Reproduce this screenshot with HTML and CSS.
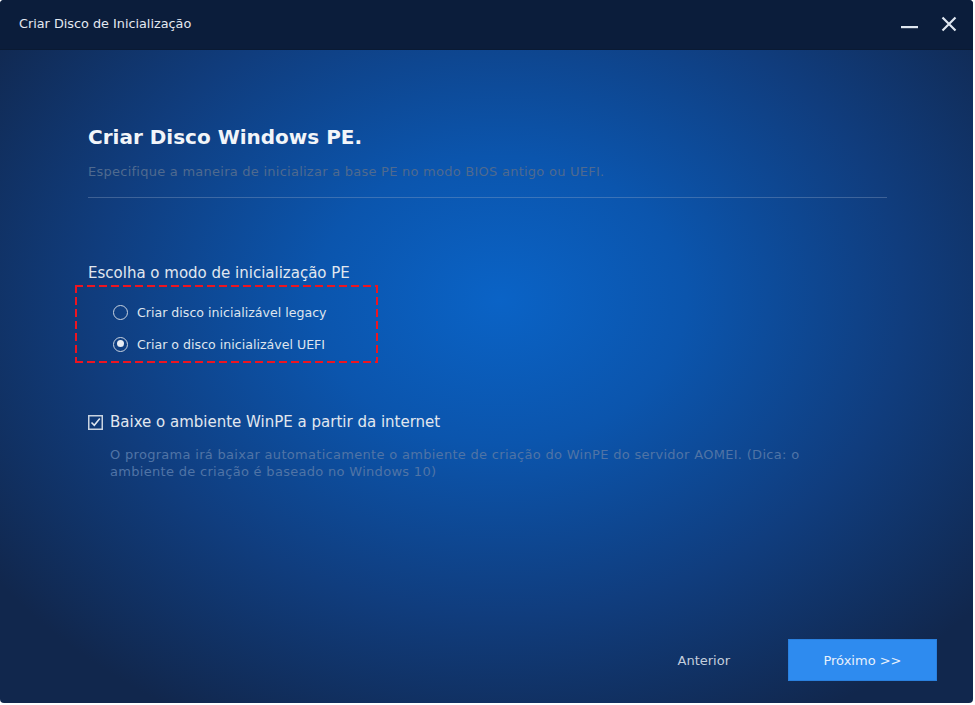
FILE: index.html
```html
<!DOCTYPE html>
<html lang="pt">
<head>
<meta charset="utf-8">
<title>Criar Disco de Inicialização</title>
<link rel="stylesheet" href="styles.css">
</head>
<body>
<div class="window">
  <div class="titlebar">
    <span class="title">Criar Disco de Inicialização</span>
    <div class="controls">
      <span class="ctl min"><svg width="18" height="18" viewBox="0 0 18 18"><rect x="0" y="11" width="17" height="2.2" fill="#dfe6f0"/></svg></span>
      <span class="ctl close"><svg width="16" height="16" viewBox="0 0 16 16"><path d="M1.5 1.5 L14.5 14.5 M14.5 1.5 L1.5 14.5" stroke="#dfe6f0" stroke-width="2.2"/></svg></span>
    </div>
  </div>
  <div class="content">
    <h1 class="heading">Criar Disco Windows PE.</h1>
    <p class="subtitle">Especifique a maneira de inicializar a base PE no modo BIOS antigo ou UEFI.</p>
    <div class="sep"></div>

    <div class="section-label">Escolha o modo de inicialização PE</div>
    <div class="radio-box">
      <div class="radio-row"><span class="radio"></span><span class="radio-text">Criar disco inicializável legacy</span></div>
      <div class="radio-row"><span class="radio checked"></span><span class="radio-text">Criar o disco inicializável UEFI</span></div>
    </div>

    <div class="check-row">
      <span class="check"><svg width="15" height="15" viewBox="0 0 15 15"><rect x="0.75" y="0.75" width="13.5" height="13.5" fill="none" stroke="#c9d3e0" stroke-width="1.5"/><path d="M3.5 7.5 L6.3 10.3 L11.8 3.6" fill="none" stroke="#dfe6f0" stroke-width="1.6"/></svg></span>
      <span class="check-text">Baixe o ambiente WinPE a partir da internet</span>
    </div>
    <p class="desc">O programa irá baixar automaticamente o ambiente de criação do WinPE do servidor AOMEI. (Dica: o ambiente de criação é baseado no Windows 10)</p>

    <div class="footer">
      <button class="btn-link">Anterior</button>
      <button class="btn-primary">Próximo &gt;&gt;</button>
    </div>
  </div>
</div>
</body>
</html>
```
FILE: styles.css
```css
html, body {
  margin: 0;
  padding: 0;
  background: #ffffff;
}
body {
  width: 975px;
  height: 705px;
  overflow: hidden;
  font-family: "DejaVu Sans", Verdana, sans-serif;
}
.window {
  width: 973px;
  height: 703px;
  border-radius: 4px;
  overflow: hidden;
  display: flex;
  flex-direction: column;
  background: radial-gradient(ellipse 620px 480px at 500px 300px, #0a63c6 0%, #0b55ad 30%, #103d7e 65%, #11274d 100%);
}
.titlebar {
  height: 50px;
  flex: none;
  background: #0b1d3b;
  border-bottom: 1px solid #0a1a33;
  display: flex;
  align-items: center;
  justify-content: space-between;
  box-sizing: border-box;
}
.title {
  color: #e4e9f1;
  font-size: 12.8px;
  margin-left: 19px;
  margin-top: -2px;
}
.controls {
  display: flex;
  align-items: center;
  gap: 22px;
  margin-right: 16px;
  margin-top: -2px;
}
.ctl { display: flex; }
.content {
  flex: 1;
  display: flex;
  flex-direction: column;
  padding: 0 86px 0 88px;
}
.heading {
  margin: 75px 0 0 0;
  font-size: 20px;
  font-weight: bold;
  color: #f2f5f9;
  line-height: 24px;
}
.subtitle {
  margin: 14px 0 0 0;
  font-size: 13px;
  line-height: 18px;
  color: #4f6a8f;
  letter-spacing: 0.25px;
}
.sep {
  margin-top: 16px;
  height: 1px;
  background: rgba(150, 170, 200, 0.35);
}
.section-label {
  margin-top: 66px;
  font-size: 15px;
  line-height: 18px;
  color: #e1e7ef;
}
.radio-box {
  margin: 3px 0 0 -13px;
  width: 303px;
  height: 78px;
  box-sizing: border-box;
  background:
    linear-gradient(to right, #ee1520 8px, transparent 8px) left top / 12px 2px repeat-x,
    linear-gradient(to right, #ee1520 8px, transparent 8px) left bottom / 12px 2px repeat-x,
    linear-gradient(to bottom, #ee1520 8px, transparent 8px) left top / 2px 12px repeat-y,
    linear-gradient(to bottom, #ee1520 8px, transparent 8px) right top / 2px 12px repeat-y;
  padding: 18px 0 0 38px;
  display: flex;
  flex-direction: column;
  gap: 14px;
}
.radio-row {
  display: flex;
  align-items: center;
  height: 18px;
}
.radio {
  width: 15px;
  height: 15px;
  border: 1.5px solid #c9d3e0;
  border-radius: 50%;
  box-sizing: border-box;
  position: relative;
  flex: none;
}
.radio.checked::after {
  content: "";
  position: absolute;
  left: 2.5px;
  top: 2.5px;
  width: 7px;
  height: 7px;
  border-radius: 50%;
  background: #e8edf4;
}
.radio-text {
  margin-left: 9px;
  font-size: 12.6px;
  color: #dfe5ee;
}
.check-row {
  margin-top: 50px;
  display: flex;
  align-items: center;
  height: 18px;
}
.check { display: flex; }
.check-text {
  margin-left: 7px;
  font-size: 15px;
  color: #e1e7ef;
}
.desc {
  margin: 15px 0 0 22px;
  font-size: 13px;
  line-height: 17px;
  color: #5074a6;
  letter-spacing: 0.3px;
  max-width: 700px;
}
.footer {
  margin-top: auto;
  margin-bottom: 22px;
  display: flex;
  justify-content: flex-end;
  align-items: center;
  margin-right: -50px;
}
.btn-link {
  background: none;
  border: none;
  font-family: inherit;
  font-size: 13px;
  color: #c3cedd;
  padding: 0;
  margin-right: 58px;
  cursor: pointer;
}
.btn-primary {
  width: 149px;
  height: 42px;
  background: #2e8bef;
  border: 1px solid #2a80de;
  color: #e8f1fc;
  font-family: inherit;
  font-size: 13px;
  cursor: pointer;
}
```
